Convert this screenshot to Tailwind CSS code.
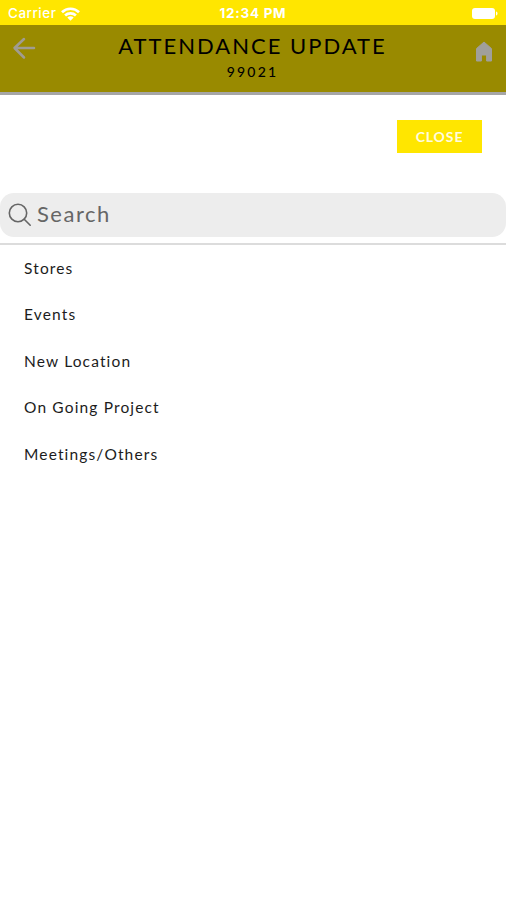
<!DOCTYPE html>
<html lang="en">
<head>
<meta charset="utf-8">
<title>Attendance Update</title>
<script src="https://cdn.jsdelivr.net/npm/@tailwindcss/browser@4"></script>
</head>
<body class="w-[506px] h-[900px] overflow-hidden bg-white font-['Lato',sans-serif] text-[#1c1c1c]">
<div class="h-[25px] bg-[#ffe600] grid grid-cols-3 items-center px-2 text-white font-['Inter',sans-serif] text-[13.500px] leading-[25px]">
  <div class="flex items-center gap-[5px] pt-px">
    <span class="font-medium tracking-[0.500px]">Carrier</span>
    <svg class="w-[19px] h-[14px]" viewBox="0 0 19 14" fill="none" stroke="#fff" stroke-width="2.7"><path d="M1 5.2C5.7.6 13.3.6 18 5.2M4.100 8.400c3-2.800 7.800-2.800 10.800 0"/><path d="M9.500 13.700 6.300 10.500c1.800-1.600 4.600-1.600 6.400 0Z" fill="#fff" stroke="none"/></svg>
  </div>
  <span class="text-center font-bold pt-px whitespace-nowrap tracking-[0.700px]">12:34 PM</span>
  <svg class="w-[28px] h-[12px] justify-self-end" viewBox="0 0 28 12" fill="#fff"><rect x="2" y="1" width="23" height="11" rx="3"/><path d="M26 4.500c2 .6 2 3.400 0 4Z"/></svg>
</div>
<header class="h-[70px] bg-[#998a00] border-b-[3px] border-[#a6a6a6] grid grid-cols-[24px_1fr_18px] pl-3 pr-[13px]">
  <svg class="w-6 h-6 mt-[11px]" viewBox="0 0 24 24" fill="none" stroke="#a09c91" stroke-width="2.500" stroke-linecap="round" stroke-linejoin="round"><path d="M22 12H3M12 3 2.500 12l9.500 9.500"/></svg>
  <div class="flex flex-col items-center text-black pr-[6px]">
    <h1 class="mt-[7px] text-[22px] leading-[28px] tracking-[2px] whitespace-nowrap">ATTENDANCE UPDATE</h1>
    <p class="text-[14px] leading-[24px] tracking-[2.200px] font-medium">99021</p>
  </div>
  <svg class="w-[18px] h-[21px] mt-4" viewBox="0 0 18 21" fill="#a09f9b"><path d="M9 1 16.500 7.600V20H11.600v-6H6.400v6H1.500V7.600Z" stroke="#a09f9b" stroke-linejoin="round"/></svg>
</header>
<main>
  <div class="flex justify-end pt-[25px] pr-6">
    <button class="w-[85px] h-[33px] bg-[#ffe600] text-[#fffce0] text-[14px] font-bold tracking-[0.9px]">CLOSE</button>
  </div>
  <div class="mt-10 h-[44px] rounded-[14px] bg-[#ededed] flex items-center pl-2 gap-[5px] text-[#666]">
    <svg class="w-6 h-6" viewBox="0 0 24 24" fill="none" stroke="#666" stroke-width="1.600" stroke-linecap="round"><circle cx="10" cy="10" r="8.700"/><path d="m16.200 16.200 6 6"/></svg>
    <span class="text-[22px] leading-[28px] tracking-[1.500px] -mt-[3px]">Search</span>
  </div>
  <ul class="mt-[6px] border-t-2 border-[#dcdcdc] pl-6 text-[15.500px] tracking-[1.150px]">
    <li class="h-[46.500px] flex items-center">Stores</li>
    <li class="h-[46.500px] flex items-center">Events</li>
    <li class="h-[46.500px] flex items-center">New Location</li>
    <li class="h-[46.500px] flex items-center">On Going Project</li>
    <li class="h-[46.500px] flex items-center">Meetings/Others</li>
  </ul>
</main>
</body>
</html>
